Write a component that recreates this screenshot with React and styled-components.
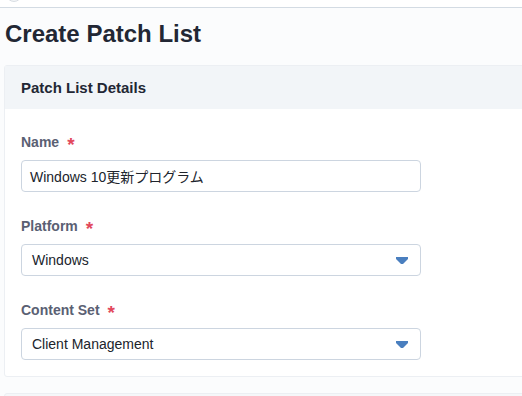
import React from 'react';
import styled, { createGlobalStyle } from 'styled-components';

const GlobalStyle = createGlobalStyle`
  html, body {
    margin: 0;
    padding: 0;
    background: #fbfcfd;
    font-family: "Liberation Sans", Arial, "Noto Sans CJK JP", sans-serif;
    overflow: hidden;
  }
`;

const TopBar = styled.div`
  height: 7px;
  background: #ffffff;
  border-bottom: 1px solid #d3dbe3;
  display: flex;
  align-items: flex-end;
  padding-left: 6px;
  overflow: hidden;
`;

const Avatar = styled.div`
  width: 14px;
  height: 14px;
  border-radius: 50%;
  border: 1px solid #d8dde3;
  background: #f3f5f7;
  margin-bottom: 5px;
  flex: none;
`;

const Page = styled.main`
  padding: 0 0 0 4px;
  height: 388px;
  overflow: hidden;
`;

const Title = styled.h1`
  margin: 12px 0 17px 1px;
  font-size: 24px;
  line-height: 28px;
  font-weight: 700;
  color: #222734;
`;

const Card = styled.section`
  width: 560px;
  background: #ffffff;
  border: 1px solid #eceff3;
  border-radius: 3px;
  ${p => p.$ghost && `
    margin-top: 16px;
    height: 40px;
    background: #f5f7f9;
  `}
`;

const CardHeader = styled.header`
  height: 43px;
  display: flex;
  align-items: center;
  padding: 0 16px;
  background: #f2f5f8;
  font-size: 15px;
  font-weight: 700;
  color: #222734;
`;

const CardBody = styled.div`
  padding: 24px 16px 16px;
  display: flex;
  flex-direction: column;
  gap: 25px;
`;

const Field = styled.div`
  display: flex;
  flex-direction: column;
  gap: 9px;
`;

const Label = styled.label`
  font-size: 14px;
  line-height: 18px;
  font-weight: 700;
  color: #5a6073;
  display: flex;
  align-items: center;
`;

const Required = styled.span`
  color: #e2485c;
  font-size: 19px;
  font-weight: 700;
  margin-left: 8px;
  line-height: 18px;
  position: relative;
  top: 3px;
`;

const Input = styled.div`
  width: 400px;
  height: 32px;
  box-sizing: border-box;
  border: 1px solid #ccd5e0;
  border-radius: 4px;
  background: #ffffff;
  display: flex;
  align-items: center;
  padding: 0 12px 0 ${p => (p.$select ? '10px' : '8px')};
  font-size: 14px;
  color: #20242c;
  justify-content: space-between;
`;

const Caret = styled.svg`
  width: 12px;
  height: 7px;
  flex: none;
`;

function Arrow() {
  return (
    <Caret viewBox="0 0 12 7">
      <polygon points="0,0 12,0 12,2 7,7 5,7 0,2" fill="#4a7fbf" />
    </Caret>
  );
}

export default function App() {
  return (
    <>
      <GlobalStyle />
      <TopBar>
        <Avatar />
      </TopBar>
      <Page>
        <Title>Create Patch List</Title>
        <Card>
          <CardHeader>Patch List Details</CardHeader>
          <CardBody>
            <Field>
              <Label>Name<Required>*</Required></Label>
              <Input>Windows 10更新プログラム</Input>
            </Field>
            <Field>
              <Label>Platform<Required>*</Required></Label>
              <Input $select>Windows<Arrow /></Input>
            </Field>
            <Field>
              <Label>Content Set<Required>*</Required></Label>
              <Input $select>Client Management<Arrow /></Input>
            </Field>
          </CardBody>
        </Card>
        <Card $ghost />
      </Page>
    </>
  );
}
